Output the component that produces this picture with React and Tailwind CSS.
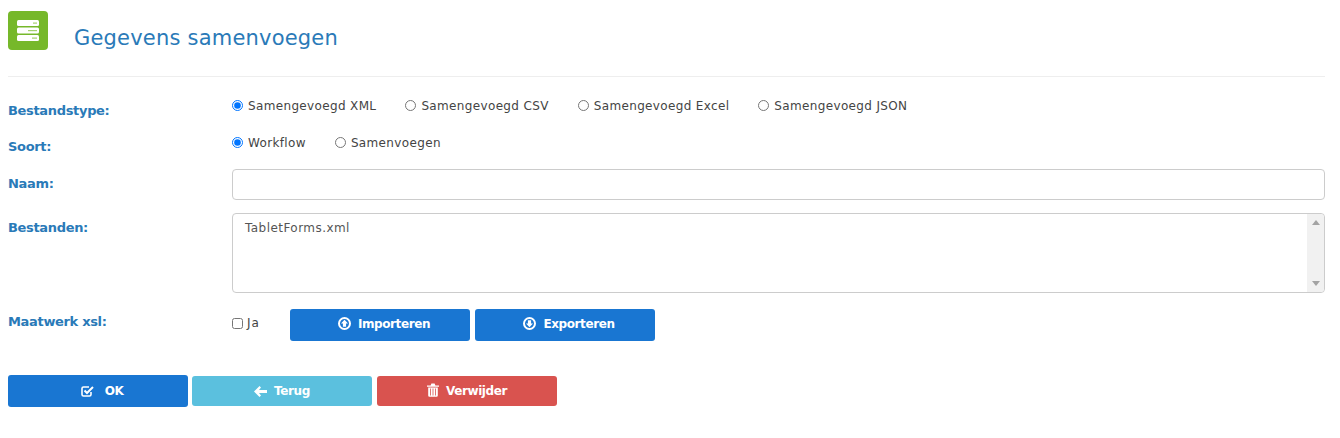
import React from "react";

const font = "font-['DejaVu_Sans',sans-serif]";

const IconUp = () => (
  <svg width="13" height="13" viewBox="0 0 13 13" className="mb-[2px]">
    <circle cx="6.5" cy="6.5" r="5.5" fill="none" stroke="#fff" strokeWidth="2" />
    <path d="M6.5 2.8 10 6.6H8.1V9.8H4.9V6.6H3Z" fill="#fff" />
  </svg>
);
const IconDown = () => (
  <svg width="13" height="13" viewBox="0 0 13 13" className="mb-[2px]">
    <circle cx="6.5" cy="6.5" r="5.5" fill="none" stroke="#fff" strokeWidth="2" />
    <path d="M6.5 10.2 10 6.4H8.1V3.2H4.9V6.4H3Z" fill="#fff" />
  </svg>
);
const IconCheck = () => (
  <svg width="13" height="12" viewBox="0 0 13 12" className="mr-[4px] mb-[1px]">
    <path d="M10 7v2.5A1.5 1.5 0 0 1 8.5 11h-6A1.5 1.5 0 0 1 1 9.5v-6A1.5 1.5 0 0 1 2.5 2H8" fill="none" stroke="#fff" strokeWidth="1.6" />
    <path d="M3.5 5.5 6 8l6-6" fill="none" stroke="#fff" strokeWidth="2" />
  </svg>
);
const IconBack = () => (
  <svg width="13" height="11" viewBox="0 0 13 11" fill="#fff">
    <path d="M0 5.5 5.5 0 7 1.5 5 4h8v3H5l2 2.5L5.5 11Z" />
  </svg>
);
const IconTrash = () => (
  <svg width="12" height="14" viewBox="0 0 12 14" fill="#fff" className="mb-[2px]">
    <path d="M0 2.5h3.6L4.4.5h3.2l.8 2H12v1.2H0Z" />
    <path fillRule="evenodd" d="M1.2 4.4h9.6V12.5a1.2 1.2 0 0 1-1.2 1.2H2.4a1.2 1.2 0 0 1-1.2-1.2ZM3 5.4v7h.8v-7Zm2.6 0v7h.8v-7Zm2.6 0v7H9v-7Z" />
  </svg>
);

function Radio({ label, checked }) {
  return (
    <label className="flex items-center gap-[5px] text-[12px] leading-[16px] tracking-[0.35px] text-[#444]">
      <input type="radio" name={label} defaultChecked={checked} className="m-0 mb-[1px] h-[11px] w-[11px] accent-[#0075ff]" />
      {label}
    </label>
  );
}

function Btn({ icon, children, color, h = "h-8", cls = "" }) {
  return (
    <button className={`flex w-[180px] ${h} items-center justify-center gap-[7px] rounded-[3px] text-[12px] font-bold tracking-[-0.4px] text-white ${color} ${cls}`}>
      {icon}
      <span>{children}</span>
    </button>
  );
}

function Label({ children, cls }) {
  return <div className={`w-[224px] shrink-0 text-[13px] font-bold leading-[16px] tracking-[-0.33px] text-[#2a7ab8] ${cls}`}>{children}</div>;
}

export default function App() {
  return (
    <div className={`${font} h-[438px] bg-white pl-2 pr-[15px] pt-[11px]`}>
      <div className="flex h-[66px] border-b border-[#eeeeee]">
        <div className="flex h-[39px] w-10 items-center justify-center rounded-[4px] bg-[#76b82a]">
          <svg width="24" height="21" viewBox="0 0 24 21" fill="#fff">
            <rect x="1" y="0" width="22" height="6" rx="1.5" />
            <rect x="1" y="7.5" width="22" height="6" rx="1.5" />
            <rect x="1" y="15" width="22" height="6" rx="1.5" />
            <rect x="17" y="2.5" width="4" height="1.2" fill="#a5d06f" />
            <rect x="12" y="10" width="9" height="1.2" fill="#a5d06f" />
            <rect x="16" y="17.5" width="5" height="1.2" fill="#a5d06f" />
          </svg>
        </div>
        <h1 className="ml-[26px] mt-[14px] text-[21px] font-normal leading-[26px] tracking-[0.2px] text-[#2a7ab8]">Gegevens samenvoegen</h1>
      </div>

      <div className="mt-[20px] flex h-[37px]">
        <Label cls="mt-[6px]">Bestandstype:</Label>
        <div className="flex h-fit gap-[29px] pt-[1px]">
          <Radio label="Samengevoegd XML" checked />
          <Radio label="Samengevoegd CSV" />
          <Radio label="Samengevoegd Excel" />
          <Radio label="Samengevoegd JSON" />
        </div>
      </div>

      <div className="flex h-[35px]">
        <Label cls="mt-[5px]">Soort:</Label>
        <div className="flex h-fit gap-[29px] pt-[1px]">
          <Radio label="Workflow" checked />
          <Radio label="Samenvoegen" />
        </div>
      </div>

      <div className="flex h-[44px]">
        <Label cls="mt-[7px]">Naam:</Label>
        <input className="h-[31px] flex-1 rounded-[4px] border border-[#cccccc] bg-white" />
      </div>

      <div className="flex h-[96px]">
        <Label cls="mt-[7px]">Bestanden:</Label>
        <div className="relative h-[80px] flex-1 rounded-[4px] border border-[#cccccc] px-3 pb-[5px] pt-[6px] text-[12px] leading-[16px] tracking-[0.45px] text-[#555]">
          TabletForms.xml
          <div className="absolute bottom-0 right-0 top-0 flex w-[17px] flex-col items-center justify-between rounded-r-[4px] bg-[#f1f1f1] py-[6px]">
            <div className="h-0 w-0 border-x-[4px] border-b-[5px] border-x-transparent border-b-[#a3a3a3]" />
            <div className="h-0 w-0 border-x-[4px] border-t-[5px] border-x-transparent border-t-[#a3a3a3]" />
          </div>
        </div>
      </div>

      <div className="flex">
        <Label cls="mt-[5px]">Maatwerk xsl:</Label>
        <label className="flex h-fit w-[58px] items-center gap-[4px] pt-[6px] text-[12px] leading-[16px] tracking-[1px] text-[#444]">
          <input type="checkbox" className="m-0 h-[11px] w-[11px]" />
          Ja
        </label>
        <div className="flex gap-[5px]">
          <Btn cls="pb-[2px] pl-2" color="bg-[#1976d2]" icon={<IconUp />}>Importeren</Btn>
          <Btn cls="pb-[2px] pl-2" color="bg-[#1976d2]" icon={<IconDown />}>Exporteren</Btn>
        </div>
      </div>

      <div className="mt-[34px] flex items-center">
        <Btn cls="pl-2" color="bg-[#1976d2]" icon={<IconCheck />}>OK</Btn>
        <Btn cls="ml-[4px]" h="h-[30px]" color="bg-[#5bc0de]" icon={<IconBack />}>Terug</Btn>
        <Btn cls="ml-[5px]" h="h-[30px]" color="bg-[#d9534f]" icon={<IconTrash />}>Verwijder</Btn>
      </div>
    </div>
  );
}
